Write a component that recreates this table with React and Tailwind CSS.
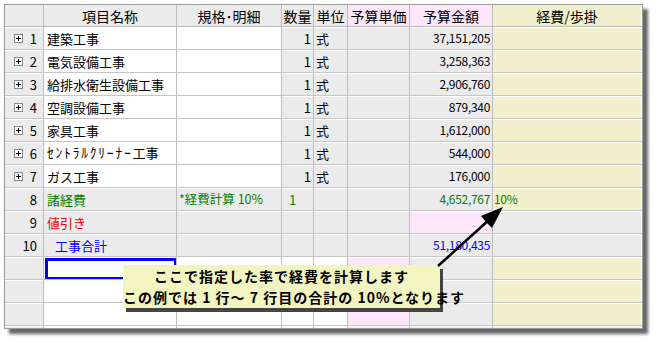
import React from "react";

const GRAY = "bg-[#ebebeb]";
const WHITE = "bg-white";
const PINK = "bg-[#fde6fa]";
const BEIGE = "bg-[#f0f0cc]";

function bgFor(key, r) {
  const lower = r >= 11;
  switch (key) {
    case "no":
      return GRAY;
    case "name":
    case "spec":
      return r >= 8 && r <= 10 ? GRAY : WHITE;
    case "qty":
    case "unit":
      return lower ? WHITE : GRAY;
    case "price":
      return lower ? PINK : GRAY;
    case "amount":
      return r === 9 ? PINK : GRAY;
    case "keihi":
      return r === 9 || r === 10 ? GRAY : BEIGE;
    default:
      return WHITE;
  }
}

const rows = [
  { n: 1, exp: true, name: "建築工事", qty: "1", unit: "式", amount: "37,151,205" },
  { n: 2, exp: true, name: "電気設備工事", qty: "1", unit: "式", amount: "3,258,363" },
  { n: 3, exp: true, name: "給排水衛生設備工事", qty: "1", unit: "式", amount: "2,906,760" },
  { n: 4, exp: true, name: "空調設備工事", qty: "1", unit: "式", amount: "879,340" },
  { n: 5, exp: true, name: "家具工事", qty: "1", unit: "式", amount: "1,612,000" },
  { n: 6, exp: true, name: "ｾﾝﾄﾗﾙｸﾘｰﾅｰ工事", half: true, qty: "1", unit: "式", amount: "544,000" },
  { n: 7, exp: true, name: "ガス工事", qty: "1", unit: "式", amount: "176,000" },
  { n: 8, name: "諸経費", spec: "*経費計算 10%", qtyL: "1", amount: "4,652,767", keihi: "10%", color: "text-[#008000]" },
  { n: 9, name: "値引き", color: "text-[#ff0000]" },
  { n: 10, name: "工事合計", indent: true, amount: "51,180,435", color: "text-[#0000ff]" },
  { n: null },
  { n: null },
  { n: null },
  { n: null },
];

function PlusBox() {
  return (
    <svg width="9" height="9" viewBox="0 0 9 9" className="shrink-0">
      <rect x="0.5" y="0.5" width="8" height="8" fill="#fff" stroke="#8a8a8a" />
      <path d="M2 4.5H7M4.5 2V7" stroke="#000" strokeWidth="1" />
    </svg>
  );
}

const cellBase =
  "h-full flex items-center border-r border-[#bdbdbd] shadow-[inset_0_1px_0_#ffffff] overflow-hidden whitespace-nowrap";

function Row({ row, idx }) {
  const r = idx + 1;
  const c = row.color || "text-black";
  return (
    <div className="flex h-[23px] border-b border-[#c6c6c6] text-[13px] leading-none">
      <div className={`${cellBase} w-[39px] ${bgFor("no", r)} relative`}>
        {row.exp && (
          <span className="absolute left-[9px] top-[7px]">
            <PlusBox />
          </span>
        )}
        {row.n && <span className="ml-auto pr-[6px] text-[13px]">{row.n}</span>}
      </div>
      <div className={`${cellBase} w-[133px] ${bgFor("name", r)} ${c} relative`}>
        {row.name && (
          <span className={row.indent ? "pl-[11px]" : "pl-[3px]"}>
            {row.half ? (
              <>
                <span className="tracking-[1.8px] text-[13.5px]">ｾﾝﾄﾗﾙｸﾘｰﾅｰ</span>工事
              </>
            ) : (
              row.name
            )}
          </span>
        )}
        {r === 11 && (
          <div className="absolute left-[1px] top-[1px] right-[-1px] bottom-[-1px] border-[3px] border-[#0000ff]" />
        )}
      </div>
      <div className={`${cellBase} w-[105px] ${bgFor("spec", r)} ${c}`}>
        {row.spec && <span className="pl-[2px] text-[12.5px]">{row.spec}</span>}
      </div>
      <div className={`${cellBase} w-[32px] ${bgFor("qty", r)} ${c}`}>
        {row.qty && <span className="ml-auto pr-[2px]">{row.qty}</span>}
        {row.qtyL && <span className="pl-[7px]">{row.qtyL}</span>}
      </div>
      <div className={`${cellBase} w-[34px] ${bgFor("unit", r)} ${c}`}>
        {row.unit && <span className="pl-[2px]">{row.unit}</span>}
      </div>
      <div className={`${cellBase} w-[62px] ${bgFor("price", r)} ${c}`} />
      <div className={`${cellBase} w-[83px] ${bgFor("amount", r)} ${c}`}>
        {row.amount && (
          <span className="ml-auto pr-[2px] text-[12px] tracking-[-0.3px]">{row.amount}</span>
        )}
      </div>
      <div className={`h-full flex items-center border-r border-white shadow-[inset_0_1px_0_#ffffff] w-[149px] ${bgFor("keihi", r)} ${c}`}>
        {row.keihi && <span className="pl-[1px] text-[12px] tracking-[-0.3px]">{row.keihi}</span>}
      </div>
    </div>
  );
}

function Header() {
  const h = "h-full flex items-center justify-center border-r border-[#bdbdbd] whitespace-nowrap";
  return (
    <div className="flex h-[22px] border-b border-[#b8b8b8] text-[14px] leading-none text-black">
      <div className={`${h} w-[39px] ${GRAY}`} />
      <div className={`${h} w-[133px] ${GRAY}`}>項目名称</div>
      <div className={`${h} w-[105px] ${GRAY}`}>規格･明細</div>
      <div className={`${h} w-[32px] ${GRAY}`}>数量</div>
      <div className={`${h} w-[34px] ${GRAY}`}>単位</div>
      <div className={`${h} w-[62px] ${PINK}`}>予算単価</div>
      <div className={`${h} w-[83px] ${PINK}`}>予算金額</div>
      <div className={`h-full flex items-center justify-center border-r border-white w-[149px] ${BEIGE}`}>経費/歩掛</div>
    </div>
  );
}

export default function App() {
  return (
    <div className="relative w-[656px] h-[344px] bg-white pt-[4px] pl-[4px] font-['Noto_Sans_CJK_JP',sans-serif] overflow-hidden">
      <div className="w-[639px] h-[325px] border border-[#9c9c9c] bg-white overflow-hidden shadow-[5px_5px_3px_rgba(0,0,0,0.6)]">
        <Header />
        {rows.map((row, i) => (
          <Row key={i} row={row} idx={i} />
        ))}
      </div>

      <div className="absolute left-[123px] top-[265px] w-[317px] h-[43px] bg-[#f3f5c0] shadow-[3px_4px_0_#444444] pt-[1px] text-center font-bold text-[14px] leading-[21px] tracking-[1px] text-black whitespace-nowrap">
        <div>ここで指定した率で経費を計算します</div>
        <div>この例では 1 行～ 7 行目の合計の 10%となります</div>
      </div>

      <svg className="absolute left-0 top-0 pointer-events-none" width="656" height="344">
        <line x1="438" y1="266" x2="490" y2="219" stroke="#000" strokeWidth="2.5" />
        <polygon points="503,207 492,228 486,222 481,216" fill="#000" />
      </svg>
    </div>
  );
}
